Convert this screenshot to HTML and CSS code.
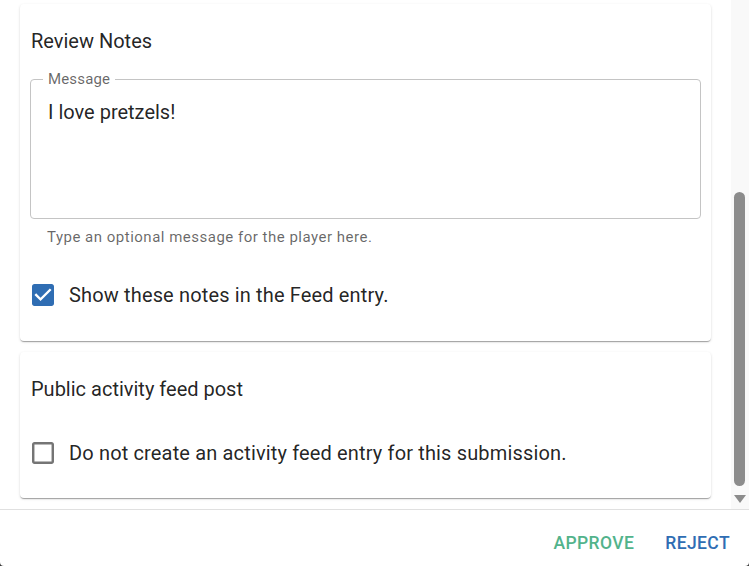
FILE: index.html
```html
<!DOCTYPE html>
<html lang="en">
<head>
<meta charset="utf-8">
<title>Review submission</title>
<link rel="stylesheet" href="styles.css">
</head>
<body>
<div class="dialog">
  <div class="dialog-body">
    <div class="scroller">
      <section class="card card-notes">
        <h2 class="card-title">Review Notes</h2>
        <div class="field">
          <span class="field-label">Message</span>
          <div class="field-value">I love pretzels!</div>
        </div>
        <p class="helper">Type an optional message for the player here.</p>
        <label class="check-row">
          <span class="box">
            <svg viewBox="3 3 18 18" width="22" height="22" class="box-on"><path d="M19 3H5c-1.11 0-2 .9-2 2v14c0 1.1.89 2 2 2h14c1.11 0 2-.9 2-2V5c0-1.1-.89-2-2-2zm-9 14l-5-5 1.41-1.41L10 14.17l7.59-7.59L19 8l-9 9z"/></svg>
          </span>
          <span class="check-text">Show these notes in the Feed entry.</span>
        </label>
      </section>
      <section class="card card-feed">
        <h2 class="card-title">Public activity feed post</h2>
        <label class="check-row check-row-feed">
          <span class="box">
            <svg viewBox="3 3 18 18" width="22" height="22" class="box-off"><path d="M19 5v14H5V5h14m0-2H5c-1.1 0-2 .9-2 2v14c0 1.1.9 2 2 2h14c1.1 0 2-.9 2-2V5c0-1.1-.9-2-2-2z"/></svg>
          </span>
          <span class="check-text">Do not create an activity feed entry for this submission.</span>
        </label>
      </section>
    </div>
    <div class="scrollbar">
      <div class="thumb"></div>
      <div class="arrow"></div>
    </div>
  </div>
  <div class="footer">
    <button class="btn btn-approve">Approve</button>
    <button class="btn btn-reject">Reject</button>
  </div>
</div>
</body>
</html>
```

FILE: styles.css
```css
html {
  background: #3a3a3a;
}
body {
  margin: 0;
  font-family: Roboto, "Liberation Sans", Arial, sans-serif;
  color: rgba(0, 0, 0, 0.87);
}
.dialog {
  width: 749px;
  height: 566px;
  background: #fff;
  display: flex;
  flex-direction: column;
  border-radius: 0 0 4px 4px;
  overflow: hidden;
}
.dialog-body {
  height: 509px;
  display: flex;
  border-bottom: 1px solid #e0e0e0;
}
.scroller {
  flex: 1;
  overflow: hidden;
  padding: 4px 20px 0;
}
.card {
  background: #fff;
  border-radius: 4px;
  box-shadow: 0 2px 1px -1px rgba(0,0,0,0.2), 0 1px 1px 0 rgba(0,0,0,0.14), 0 1px 3px 0 rgba(0,0,0,0.12);
  padding: 25px 10px 25px;
}
.card-feed {
  margin-top: 11px;
  padding-bottom: 24px;
}
.card-title {
  margin: 0 0 0 1px;
  font-size: 20px;
  font-weight: 400;
  line-height: 24px;
}
.field {
  position: relative;
  margin-top: 26px;
  height: 140px;
  box-sizing: border-box;
  border: 1px solid #c4c4c4;
  border-radius: 4px;
  padding: 20px 16px 18px;
}
.field-label {
  position: absolute;
  left: 12px;
  top: -10px;
  padding: 0 5px;
  background: #fff;
  font-size: 15px;
  line-height: 18px;
  letter-spacing: 0.15px;
  color: rgba(0, 0, 0, 0.6);
}
.field-value {
  font-size: 20px;
  line-height: 24px;
  padding-left: 1px;
}
.helper {
  margin: 8px 0 0 17px;
  font-size: 15px;
  line-height: 20px;
  letter-spacing: 0.5px;
  color: rgba(0, 0, 0, 0.6);
}
.check-row {
  display: flex;
  align-items: center;
  height: 42px;
  margin-top: 27px;
  padding-left: 2px;
  gap: 15px;
}
.check-row-feed {
  margin-top: 31px;
}
.box {
  display: flex;
  width: 22px;
  height: 22px;
}
.box-on {
  fill: #2f6db3;
}
.box-off {
  fill: #757575;
}
.check-text {
  font-size: 20px;
  line-height: 24px;
  letter-spacing: 0.15px;
}
.scrollbar {
  width: 18px;
  background: #f9f9f9;
  display: flex;
  flex-direction: column;
  align-items: center;
  padding-top: 192px;
  box-sizing: border-box;
}
.thumb {
  width: 11px;
  height: 294px;
  border-radius: 6px;
  background: #8c8c8c;
  margin-right: 1px;
}
.arrow {
  margin-top: 9px;
  margin-right: 1px;
  width: 0;
  height: 0;
  border-left: 6px solid transparent;
  border-right: 6px solid transparent;
  border-top: 8px solid #8c8c8c;
}
.footer {
  flex: 1;
  display: flex;
  justify-content: flex-end;
  align-items: flex-end;
  gap: 15px;
  padding: 0 11px 11px;
}
.btn {
  border: 0;
  background: none;
  font-family: Roboto, "Liberation Sans", Arial, sans-serif;
  font-size: 17.5px;
  font-weight: 500;
  line-height: 24px;
  letter-spacing: 0.4px;
  text-transform: uppercase;
  padding: 0 8px;
  cursor: pointer;
}
.btn-approve {
  color: #52b38b;
}
.btn-reject {
  color: #2f6db3;
}
```
